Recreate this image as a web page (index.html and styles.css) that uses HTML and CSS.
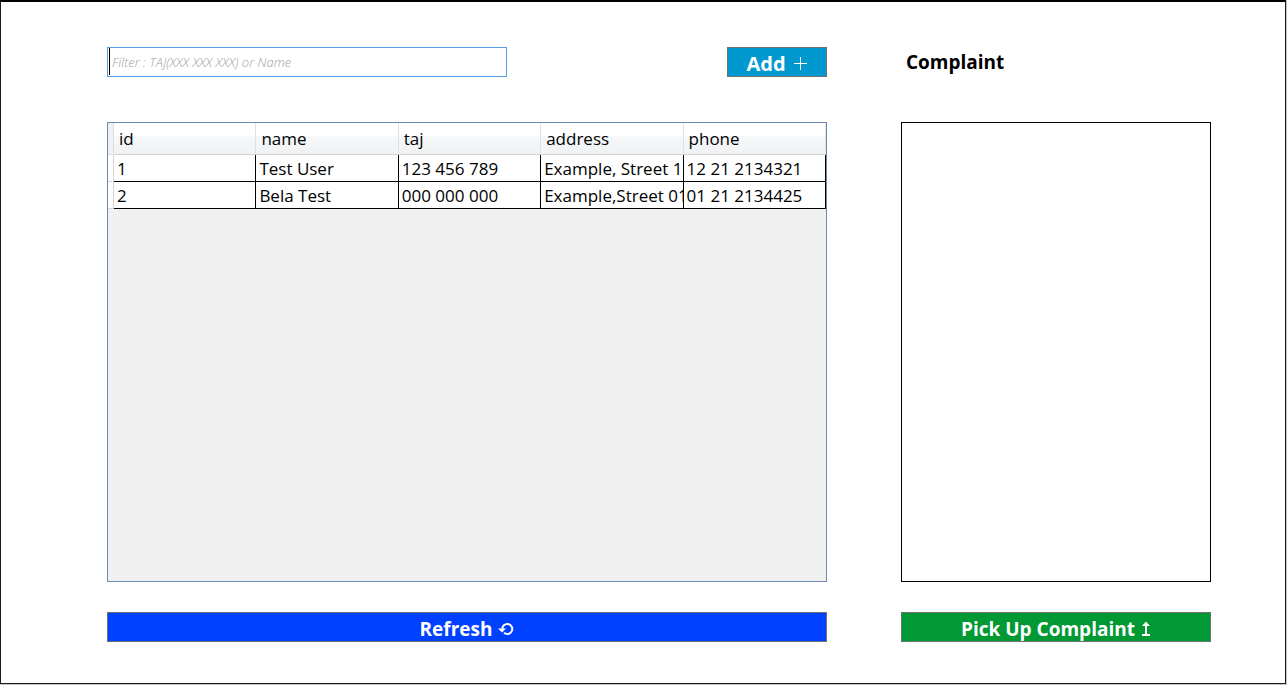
FILE: index.html
```
<!DOCTYPE html>
<html lang="en">
<head>
<meta charset="utf-8">
<title>Patients</title>
<link rel="stylesheet" href="styles.css">
</head>
<body>
<main class="window">
  <div class="toolbar">
    <div class="filter">
      <input class="filter-input" type="text" aria-label="Filter" placeholder="Filter : TAJ(XXX XXX XXX) or Name">
    </div>
    <button class="btn btn-add" type="button">Add
      <svg class="icon-plus" viewBox="0 0 14 14" aria-hidden="true"><path d="M6.5 0v13M0 6.5h13"/></svg>
    </button>
  </div>
  <h2 class="title" id="complaint-title">Complaint</h2>
  <div class="grid-panel">
    <table class="data">
      <colgroup><col class="col-marker"><col><col><col><col><col></colgroup>
      <thead>
        <tr><td class="corner"></td><th scope="col">id</th><th scope="col">name</th><th scope="col">taj</th><th scope="col">address</th><th scope="col">phone</th></tr>
      </thead>
      <tbody>
        <tr><td class="marker"></td><td><div class="cell">1</div></td><td><div class="cell">Test User</div></td><td><div class="cell">123 456 789</div></td><td><div class="cell">Example, Street 1</div></td><td><div class="cell">12 21 2134321</div></td></tr>
        <tr><td class="marker"></td><td><div class="cell">2</div></td><td><div class="cell">Bela Test</div></td><td><div class="cell">000 000 000</div></td><td><div class="cell">Example,Street 01</div></td><td><div class="cell">01 21 2134425</div></td></tr>
      </tbody>
    </table>
  </div>
  <textarea class="complaint" aria-labelledby="complaint-title"></textarea>
  <button class="btn btn-refresh" type="button">Refresh
    <svg class="icon-refresh" viewBox="0 0 16 14" aria-hidden="true"><path class="line" d="M4.3 7.5A5 5 0 1 1 6 10.8"/><path class="head" d="M0 6.4h8L4 10.6z"/></svg>
  </button>
  <button class="btn btn-pick" type="button">Pick Up Complaint
    <svg class="icon-up" viewBox="0 0 10 16" aria-hidden="true"><path class="line" d="M5 3v11M1 14h8"/><path class="head" d="M5 0.5L9 5H1z"/></svg>
  </button>
</main>
</body>
</html>
```
FILE: styles.css
```
* {
  box-sizing: border-box;
}

body {
  margin: 0;
  padding: 0 1px 1px 0;
  min-height: 100vh;
  display: flex;
  background: #c4c8c4;
  color: #000;
  font-family: "Open Sans", "Noto Sans", sans-serif;
  font-size: 17px;
}

.window {
  flex: 1;
  display: grid;
  grid-template-columns: 720fr 310fr;
  grid-template-rows: 30px 1fr 30px;
  column-gap: 74px;
  padding: 45px 74px 41px 106px;
  background: #fff;
  border: 1px solid #1a1a1a;
  border-top: 2px solid #000;
}

.toolbar {
  display: flex;
  justify-content: space-between;
}

.filter {
  position: relative;
  width: 400px;
}

.filter::before {
  content: "";
  position: absolute;
  left: 2px;
  top: 1px;
  bottom: 2px;
  width: 1px;
  background: #000;
}

.filter-input {
  width: 100%;
  height: 100%;
  padding: 0 4px;
  border: 1px solid #569de5;
  border-radius: 0;
  outline: 0;
  background: #fff;
  font: 13px "Open Sans", "Noto Sans", sans-serif;
}

.filter-input::placeholder {
  color: #a0a0a0;
  font-style: italic;
  font-weight: 300;
  opacity: 1;
}

.btn {
  display: flex;
  align-items: center;
  justify-content: center;
  gap: 6px;
  padding: 3px 0 0;
  border: 1px solid #707070;
  border-radius: 0;
  color: #fff;
  font: bold 19px/24px "Open Sans", "Noto Sans", sans-serif;
}

.btn-add {
  width: 100px;
  gap: 8px;
  background: #0099cf;
  font-size: 20px;
}

.btn-refresh {
  background: #0040ff;
}

.btn-pick {
  background: #009933;
}

.btn svg {
  fill: none;
  stroke: #fff;
}

.btn .head {
  fill: #fff;
  stroke: none;
}

.icon-plus {
  width: 14px;
  height: 14px;
}

.icon-refresh {
  width: 16px;
  height: 14px;
}

.icon-refresh .line,
.icon-up .line {
  stroke-width: 2;
}

.icon-up {
  width: 10px;
  height: 16px;
}

.title {
  margin: 0;
  padding-left: 5px;
  font-size: 19px;
  line-height: 30px;
}

.grid-panel,
.complaint {
  margin: 45px 0 30px;
}

.grid-panel {
  background: #f0f0f0;
  border: 1px solid #688caf;
}

.complaint {
  display: block;
  width: 100%;
  padding: 4px;
  border: 1px solid #000;
  border-radius: 0;
  outline: 0;
  resize: none;
  background: #fff;
  font: inherit;
}

.data {
  width: 100%;
  table-layout: fixed;
  border-collapse: separate;
  border-spacing: 0;
}

.col-marker {
  width: 6px;
}

.data th,
.data td {
  white-space: nowrap;
  text-align: left;
  font-weight: normal;
}

.data th {
  height: 32px;
  padding: 0 5px;
  border-right: 1px solid #dfe1e4;
  border-bottom: 1px solid #d0d2d4;
  background: linear-gradient(#fff 0, #fff 40%, #f7f8fa 41%, #f0f1f3 100%);
}

.data td {
  height: 27px;
  padding: 1px 0 0 3px;
  border-right: 1px solid #000;
  border-bottom: 1px solid #000;
  background: #fff;
  line-height: 25px;
}

.cell {
  overflow: hidden;
}

.data .corner {
  padding: 0;
  border-color: #e0e0e0;
  background: #f0f0f0;
}

.data .marker {
  padding: 0;
  border-color: #d5d5d5;
}
```
